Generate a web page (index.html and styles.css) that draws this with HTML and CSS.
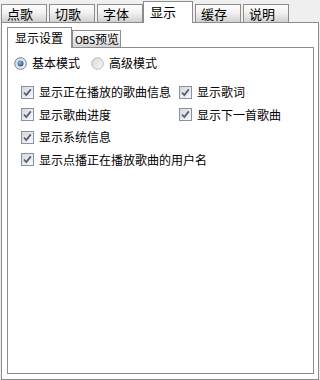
FILE: index.html
```html
<!DOCTYPE html>
<html lang="zh-CN">
<head>
<meta charset="utf-8">
<title>显示</title>
<link rel="stylesheet" href="styles.css">
</head>
<body>
<svg width="0" height="0" class="defs" aria-hidden="true">
  <defs>
    <linearGradient id="boxfill" x1="0" y1="0" x2="1" y2="1">
      <stop offset="0" stop-color="#d6d6d6"/>
      <stop offset="1" stop-color="#fbfbfb"/>
    </linearGradient>
    <radialGradient id="dot" cx="0.4" cy="0.35" r="0.7">
      <stop offset="0" stop-color="#8fb8ea"/>
      <stop offset="1" stop-color="#1f4f8f"/>
    </radialGradient>
  </defs>
</svg>
<div class="win">
  <div class="tabs">
    <div class="tab">点歌</div>
    <div class="tab">切歌</div>
    <div class="tab">字体</div>
    <div class="tab active">显示</div>
    <div class="tab">缓存</div>
    <div class="tab">说明</div>
  </div>
  <div class="panel">
    <div class="subtabs">
      <div class="subtab active">显示设置</div>
      <div class="subtab obs"><span class="latin">OBS</span>预览</div>
    </div>
    <div class="subpanel">
      <div class="radios">
        <label class="opt">
          <svg class="radio" width="13" height="13" viewBox="0 0 13 13"><circle cx="6.5" cy="6.5" r="5.8" fill="url(#boxfill)" stroke="#6f7d92"/><circle cx="6.5" cy="6.5" r="3" fill="url(#dot)"/></svg>
          <span>基本模式</span>
        </label>
        <label class="opt">
          <svg class="radio" width="13" height="13" viewBox="0 0 13 13"><circle cx="6.5" cy="6.5" r="5.8" fill="url(#boxfill)" stroke="#b4b8bf"/></svg>
          <span>高级模式</span>
        </label>
      </div>
      <div class="checks">
        <label class="opt">
          <svg class="cb" width="13" height="13" viewBox="0 0 13 13"><rect x="0.5" y="0.5" width="12" height="12" fill="url(#boxfill)" stroke="#8593a8"/><path d="M3 6.5 L5.3 9 L9.8 3.4" fill="none" stroke="#50607e" stroke-width="1.8"/></svg>
          <span>显示正在播放的歌曲信息</span>
        </label>
        <label class="opt">
          <svg class="cb" width="13" height="13" viewBox="0 0 13 13"><rect x="0.5" y="0.5" width="12" height="12" fill="url(#boxfill)" stroke="#8593a8"/><path d="M3 6.5 L5.3 9 L9.8 3.4" fill="none" stroke="#50607e" stroke-width="1.8"/></svg>
          <span>显示歌词</span>
        </label>
        <label class="opt">
          <svg class="cb" width="13" height="13" viewBox="0 0 13 13"><rect x="0.5" y="0.5" width="12" height="12" fill="url(#boxfill)" stroke="#8593a8"/><path d="M3 6.5 L5.3 9 L9.8 3.4" fill="none" stroke="#50607e" stroke-width="1.8"/></svg>
          <span>显示歌曲进度</span>
        </label>
        <label class="opt">
          <svg class="cb" width="13" height="13" viewBox="0 0 13 13"><rect x="0.5" y="0.5" width="12" height="12" fill="url(#boxfill)" stroke="#8593a8"/><path d="M3 6.5 L5.3 9 L9.8 3.4" fill="none" stroke="#50607e" stroke-width="1.8"/></svg>
          <span>显示下一首歌曲</span>
        </label>
        <label class="opt span2">
          <svg class="cb" width="13" height="13" viewBox="0 0 13 13"><rect x="0.5" y="0.5" width="12" height="12" fill="url(#boxfill)" stroke="#8593a8"/><path d="M3 6.5 L5.3 9 L9.8 3.4" fill="none" stroke="#50607e" stroke-width="1.8"/></svg>
          <span>显示系统信息</span>
        </label>
        <label class="opt span2">
          <svg class="cb" width="13" height="13" viewBox="0 0 13 13"><rect x="0.5" y="0.5" width="12" height="12" fill="url(#boxfill)" stroke="#8593a8"/><path d="M3 6.5 L5.3 9 L9.8 3.4" fill="none" stroke="#50607e" stroke-width="1.8"/></svg>
          <span>显示点播正在播放歌曲的用户名</span>
        </label>
      </div>
    </div>
  </div>
</div>
</body>
</html>
```
FILE: styles.css
```css
* { box-sizing: border-box; }
html, body { margin: 0; padding: 0; }
body {
  background: #efefef;
  font-family: "Noto Sans CJK SC", "Liberation Sans", sans-serif;
  font-size: 12px;
  color: #000;
  width: 320px;
  height: 380px;
  overflow: hidden;
}
.defs { position: absolute; }
.win { width: 320px; height: 380px; }

.tabs {
  display: flex;
  align-items: flex-end;
  height: 22px;
  padding-left: 1px;
}
.tab {
  width: 46px;
  height: 18px;
  margin-right: 2px;
  border: 1px solid #8c8c8c;
  border-bottom: none;
  background: linear-gradient(#fdfdfd, #f1f1f1 45%, #d0d0d0);
  font-size: 13px;
  line-height: 17px;
  padding-left: 5px;
  white-space: nowrap;
}
.tab.active {
  position: relative;
  z-index: 1;
  width: 50px;
  height: 22px;
  margin-left: -2px;
  margin-bottom: -1px;
  background: #fff;
  line-height: 20px;
  padding-left: 6px;
}

.panel {
  margin: 0 1px;
  height: 358px;
  border: 1px solid #8c8c8c;
  background: #fff;
  padding: 4px 4px 0 5px;
}

.subtabs {
  display: flex;
  align-items: flex-end;
  height: 20px;
}
.subtab {
  height: 17px;
  border: 1px solid #8c8c8c;
  border-bottom: none;
  background: linear-gradient(#fdfdfd, #f0f0f0 45%, #d4d4d4);
  line-height: 16px;
  padding: 0 4px;
  white-space: nowrap;
}
.subtab.active {
  position: relative;
  z-index: 1;
  height: 21px;
  margin-bottom: -1px;
  background: #fff;
  line-height: 19px;
  padding: 0 7px;
  width: 65px;
}
.subtab.obs {
  width: 49px;
  padding: 0 2px;
}
.latin {
  font-family: "Liberation Sans Narrow", "DejaVu Sans Condensed", "Liberation Sans", sans-serif;
  font-size: 11px;
  letter-spacing: -0.2px;
}

.subpanel {
  height: 327px;
  border: 1px solid #8c8c8c;
  background: #fff;
  padding: 7px 0 0 6px;
}

.opt {
  display: flex;
  align-items: center;
  gap: 5px;
  white-space: nowrap;
  line-height: 16px;
}
.opt svg { flex: none; display: block; }

.radios {
  display: flex;
  gap: 11px;
  height: 16px;
}

.checks {
  margin-top: 10px;
  margin-left: 7px;
  display: grid;
  grid-template-columns: 158px auto;
  grid-auto-rows: 22.5px;
  align-items: center;
}
.span2 { grid-column: 1 / span 2; }
```
